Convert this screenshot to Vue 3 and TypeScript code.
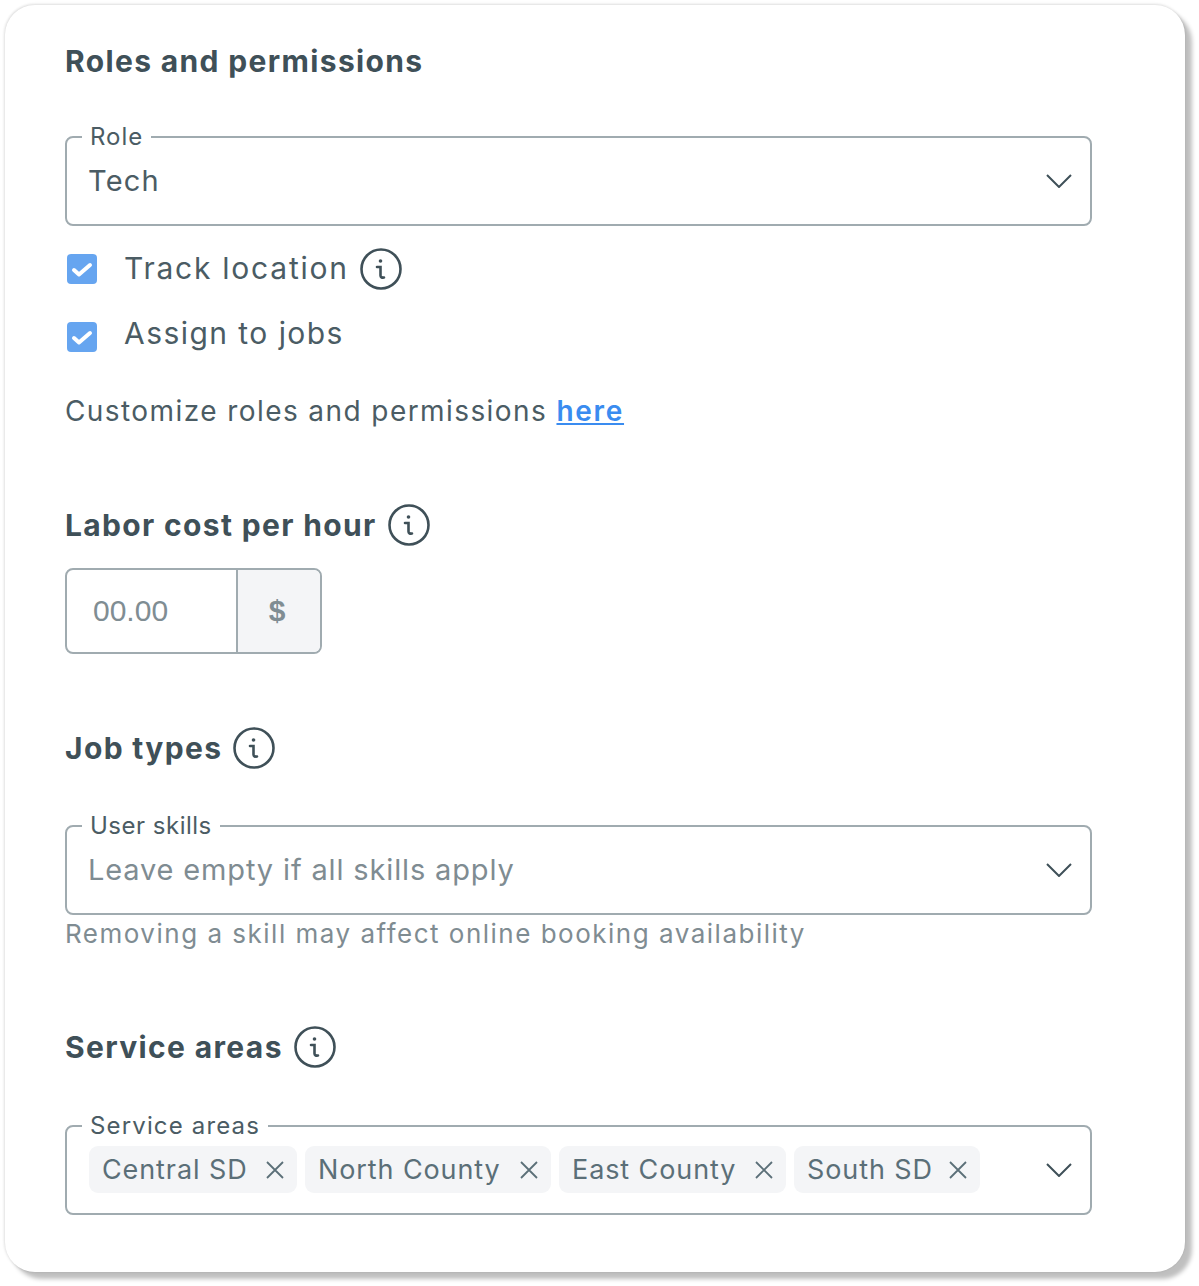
<script setup lang="ts">
const areas: { name: string; width: number }[] = [
  { name: 'Central SD', width: 208 },
  { name: 'North County', width: 246 },
  { name: 'East County', width: 227 },
  { name: 'South SD', width: 186 },
]
</script>

<template>
  <div class="page">
    <section class="card">
      <h2 class="title first">Roles and permissions</h2>

      <div class="field role">
        <span class="legend">Role</span>
        <span class="value">Tech</span>
        <svg class="chevron" viewBox="0 0 26 14"><path d="M1 1l12 12L25 1" /></svg>
      </div>

      <div class="check track">
        <span class="box"><svg viewBox="0 0 30 30"><path d="M7 16l5 4.500L23 11" /></svg></span>
        <span class="check-label">Track location</span>
        <svg class="info" viewBox="0 0 42 42"><circle cx="21" cy="21" r="19.500" /><circle cx="20.500" cy="13" r="1.800" class="dot" /><path d="M17 19h3.500v8.500q0 2.500 3.500 2" /></svg>
      </div>
      <div class="check assign">
        <span class="box"><svg viewBox="0 0 30 30"><path d="M7 16l5 4.500L23 11" /></svg></span>
        <span class="check-label">Assign to jobs</span>
      </div>

      <p class="custom">Customize roles and permissions <a href="#" class="link">here</a></p>

      <div class="heading labor">
        <h2 class="title">Labor cost per hour</h2>
        <svg class="info" viewBox="0 0 42 42"><circle cx="21" cy="21" r="19.500" /><circle cx="20.500" cy="13" r="1.800" class="dot" /><path d="M17 19h3.500v8.500q0 2.500 3.500 2" /></svg>
      </div>

      <div class="money">
        <span class="amount">00.00</span>
        <span class="currency">$</span>
      </div>

      <div class="heading jobs">
        <h2 class="title">Job types</h2>
        <svg class="info" viewBox="0 0 42 42"><circle cx="21" cy="21" r="19.500" /><circle cx="20.500" cy="13" r="1.800" class="dot" /><path d="M17 19h3.500v8.500q0 2.500 3.500 2" /></svg>
      </div>

      <div class="field skills">
        <span class="legend">User skills</span>
        <span class="value placeholder">Leave empty if all skills apply</span>
        <svg class="chevron" viewBox="0 0 26 14"><path d="M1 1l12 12L25 1" /></svg>
      </div>
      <p class="hint">Removing a skill may affect online booking availability</p>

      <div class="heading areas">
        <h2 class="title">Service areas</h2>
        <svg class="info" viewBox="0 0 42 42"><circle cx="21" cy="21" r="19.500" /><circle cx="20.500" cy="13" r="1.800" class="dot" /><path d="M17 19h3.500v8.500q0 2.500 3.500 2" /></svg>
      </div>

      <div class="field service">
        <span class="legend">Service areas</span>
        <div class="chips">
          <span v-for="a in areas" :key="a.name" class="chip" :style="{ width: a.width + 'px' }">
            {{ a.name }}
            <svg viewBox="0 0 18 18"><path d="M1 1l16 16M17 1L1 17" /></svg>
          </span>
        </div>
        <svg class="chevron" viewBox="0 0 26 14"><path d="M1 1l12 12L25 1" /></svg>
      </div>
    </section>
  </div>
</template>

<style>
html, body { margin: 0; background: #fff; }
</style>

<style scoped>
.page {
  width: 1199px;
  height: 1286px;
  padding: 5px 0 0 5px;
  box-sizing: border-box;
  font-family: Inter, "Open Sans", "Liberation Sans", sans-serif;
  color: #3f5058;
  overflow: hidden;
}
.card {
  width: 1180px;
  height: 1267px;
  box-sizing: border-box;
  padding: 0 93px 0 60px;
  background: #fff;
  border-radius: 30px;
  box-shadow: 7px 7px 4px rgba(0, 0, 0, .25), 0 -1px 3px rgba(0, 0, 0, .1), -1px 0 3px rgba(0, 0, 0, .08);
  overflow: hidden;
}
.title {
  margin: 0;
  font-size: 30px;
  line-height: 40px;
  font-weight: 700;
  color: #3f5058;
  letter-spacing: 1.35px;
}
.first { padding-top: 36px; }
.field {
  position: relative;
  height: 90px;
  box-sizing: border-box;
  padding: 0 18px 1px 22px;
  border: 2px solid #a0abb0;
  border-radius: 8px;
  display: flex;
  align-items: center;
  justify-content: space-between;
}
.legend {
  position: absolute;
  left: 15px;
  top: -14px;
  padding: 0 8px;
  background: #fff;
  font-size: 24px;
  line-height: 26px;
  letter-spacing: 1px;
  color: #4b5c64;
  white-space: nowrap;
}
.skills .legend { letter-spacing: .5px; }
.service .legend { letter-spacing: 1.15px; }
.role { margin-top: 55px; }
.value {
  margin-left: -1px;
  font-size: 29px;
  letter-spacing: 1.2px;
  color: #4b5c64;
}
.placeholder { color: #7f8c92; letter-spacing: .85px; }
.chevron {
  flex: none;
  width: 26px;
  height: 14px;
  fill: none;
  stroke: #3f5058;
  stroke-width: 2;
}
.check { display: flex; align-items: center; height: 42px; }
.track { margin-top: 22px; }
.assign { margin-top: 24px; }
.box {
  width: 30px;
  height: 30px;
  margin-left: 2px;
  flex: none;
  background: #66a5f0;
  border-radius: 4px;
}
.box svg {
  display: block;
  width: 30px;
  height: 30px;
  fill: none;
  stroke: #fff;
  stroke-width: 4;
  stroke-linecap: round;
  stroke-linejoin: round;
}
.check-label {
  position: relative;
  top: -1px;
  margin-left: 27px;
  font-size: 30px;
  letter-spacing: 1.75px;
  color: #4b5c64;
}
.assign .box { position: relative; top: 2px; }
.assign .check-label { top: -2px; letter-spacing: 1.45px; }
.info {
  flex: none;
  width: 42px;
  height: 42px;
  margin-left: 11px;
  fill: none;
  stroke: #3f5058;
  stroke-width: 2.600;
  stroke-linecap: round;
}
.info .dot { fill: #3f5058; stroke: none; }
.custom {
  margin: 35px 0 0;
  font-size: 28px;
  line-height: 40px;
  letter-spacing: 1.42px;
  color: #4b5c64;
}
.link {
  color: #3a8cf0;
  font-weight: 600;
  letter-spacing: 1.7px;
  text-decoration: underline;
}
.heading { display: flex; align-items: center; height: 42px; }
.labor { margin-top: 73px; }
.money {
  display: flex;
  width: 257px;
  height: 86px;
  margin-top: 22px;
  box-sizing: border-box;
  border: 2px solid #a0abb0;
  border-radius: 8px;
  overflow: hidden;
}
.amount {
  width: 171px;
  padding-left: 26px;
  box-sizing: border-box;
  border-right: 2px solid #a0abb0;
  font-family: "Liberation Sans", sans-serif;
  font-size: 30px;
  line-height: 81px;
  color: #808d93;
}
.currency {
  flex: 1;
  padding-right: 4px;
  background: #f4f5f7;
  text-align: center;
  font-family: "Liberation Sans", sans-serif;
  font-weight: 700;
  font-size: 30px;
  line-height: 81px;
  color: #808d93;
}
.jobs { margin-top: 73px; }
.skills { margin-top: 56px; }
.hint {
  margin: 1px 0 0;
  font-size: 26px;
  line-height: 36px;
  letter-spacing: 1.5px;
  color: #7f8c92;
}
.areas { margin-top: 74px; }
.service { margin-top: 57px; }
.chips { display: flex; gap: 8px; }
.chip {
  display: flex;
  align-items: center;
  justify-content: space-between;
  height: 47px;
  box-sizing: border-box;
  padding: 0 13px;
  background: #f4f5f7;
  border-radius: 9px;
  font-size: 27px;
  letter-spacing: .9px;
  color: #5b6f78;
  white-space: nowrap;
}
.chip svg {
  flex: none;
  width: 18px;
  height: 18px;
  fill: none;
  stroke: #5b6f78;
  stroke-width: 1.800;
}
</style>
